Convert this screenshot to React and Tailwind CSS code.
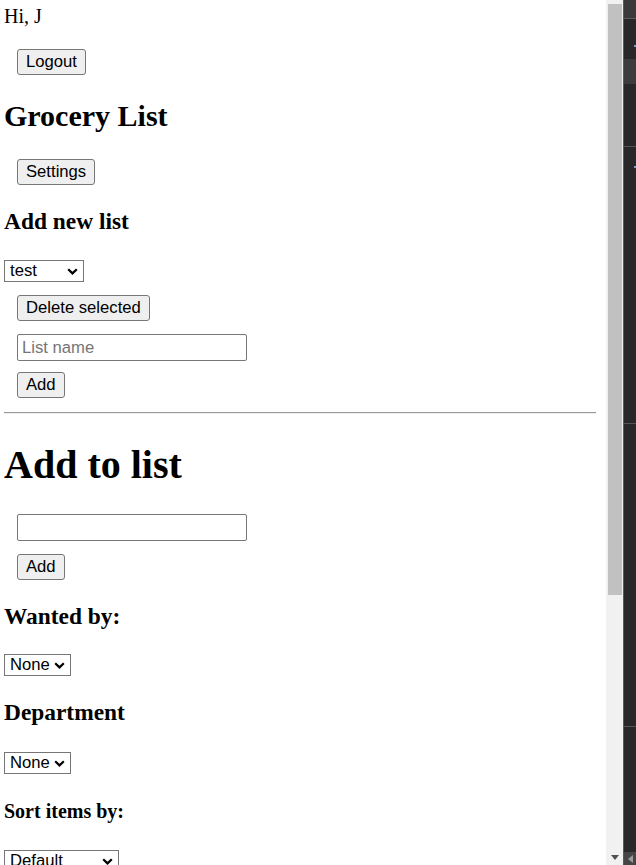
import React from "react";

const sans = "font-['Liberation_Sans',Arial,sans-serif]";

function Btn({ children, className = "" }) {
  return (
    <button
      type="button"
      className={`${sans} block ml-[13px] h-[26px] px-[8px] border border-[#767676] rounded-[3px] bg-[#efefef] text-[16.67px] leading-[20px] text-black ${className}`}
    >
      {children}
    </button>
  );
}

function Field({ placeholder = "", className = "" }) {
  return (
    <input
      type="text"
      placeholder={placeholder}
      className={`${sans} block ml-[13px] w-[230px] h-[27px] px-[4px] border border-[#767676] rounded-[2px] bg-white text-[16.67px] placeholder:text-[#757575] ${className}`}
    />
  );
}

function Pick({ label, width, className = "" }) {
  return (
    <div
      className={`${sans} flex items-center justify-between h-[22px] pl-[5px] pr-[5px] border border-[#767676] bg-white text-[16.67px] leading-[20px] text-black ${width} ${className}`}
    >
      <span>{label}</span>
      <svg width="11" height="7" viewBox="0 0 11 7" className="shrink-0">
        <path d="M1.2 1.2 L5.5 5.4 L9.8 1.2" fill="none" stroke="#000" strokeWidth="2.2" />
      </svg>
    </div>
  );
}

export default function App() {
  return (
    <div className="flex h-[865px] w-[636px] overflow-hidden bg-white">
      {/* page content */}
      <div className="w-[606px] px-[4px] font-['Liberation_Serif',serif] text-black">
        <p className="mt-[5px] text-[20px] leading-[23px]">Hi, J</p>
        <Btn className="mt-[21px]">Logout</Btn>

        <h2 className="mt-[24px] text-[30px] leading-[34px] font-bold">Grocery List</h2>
        <Btn className="mt-[26px]">Settings</Btn>

        <h3 className="mt-[23px] text-[23.4px] leading-[27px] font-bold">Add new list</h3>
        <Pick label="test" width="w-[80px]" className="mt-[25px]" />
        <Btn className="mt-[13px]">Delete selected</Btn>
        <Field placeholder="List name" className="mt-[13px]" />
        <Btn className="mt-[11px]">Add</Btn>

        <div className="mt-[14px] mr-[6px] h-[2px] border-t border-[#9a9a9a] border-b-[#eeeeee] border-b" />

        <h1 className="mt-[28px] text-[40px] leading-[46px] font-bold">Add to list</h1>
        <Field className="mt-[26px] h-[26px]" />
        <Btn className="mt-[13px]">Add</Btn>

        <h3 className="mt-[23px] text-[23.4px] leading-[27px] font-bold">Wanted by:</h3>
        <Pick label="None" width="w-[67px]" className="mt-[24px]" />

        <h3 className="mt-[23px] text-[23.4px] leading-[27px] font-bold">Department</h3>
        <Pick label="None" width="w-[67px]" className="mt-[26px]" />

        <h4 className="mt-[26px] text-[20px] leading-[23px] font-bold">Sort items by:</h4>
        <Pick label="Default" width="w-[115px]" className="mt-[27px]" />
      </div>

      {/* scrollbar */}
      <div className="w-[17px] bg-[#f1f1f1] flex flex-col pl-[2px] pr-[1px]">
        <div className="mt-[4px] h-[591px] bg-[#c1c1c1]" />
        <div className="flex-1" />
        <div className="flex justify-center pb-[5px]">
          <svg width="8" height="5" viewBox="0 0 8 5">
            <path d="M0 0 H8 L4 5 Z" fill="#505050" />
          </svg>
        </div>
      </div>

      {/* side panel strip */}
      <div className="flex-1 border-l border-[#5a5a5a] bg-[#282828] flex flex-col">
        <div className="h-[19px] bg-[#3a3a3a] border-b border-[#5c5c5c]" />
        <div className="h-[40px] relative">
          <div className="absolute right-0 top-[26px] w-[2px] h-[2px] bg-[#7a9cd0]" />
        </div>
        <div className="h-[25px] bg-[#3c3c3c]" />
        <div className="h-[63px] border-b border-[#555555] relative">
          <div className="absolute right-0 bottom-[-22px] w-[2px] h-[2px] bg-[#7a9cd0]" />
        </div>
        <div className="h-[277px] border-b border-[#555555]" />
        <div className="h-[303px] border-b border-[#555555]" />
        <div className="flex-1" />
        <div className="h-[13px] bg-[#454545] flex items-center pl-[4px]">
          <svg width="5" height="8" viewBox="0 0 5 8">
            <path d="M5 0 V8 L0 4 Z" fill="#9a9a9a" />
          </svg>
        </div>
      </div>
    </div>
  );
}
